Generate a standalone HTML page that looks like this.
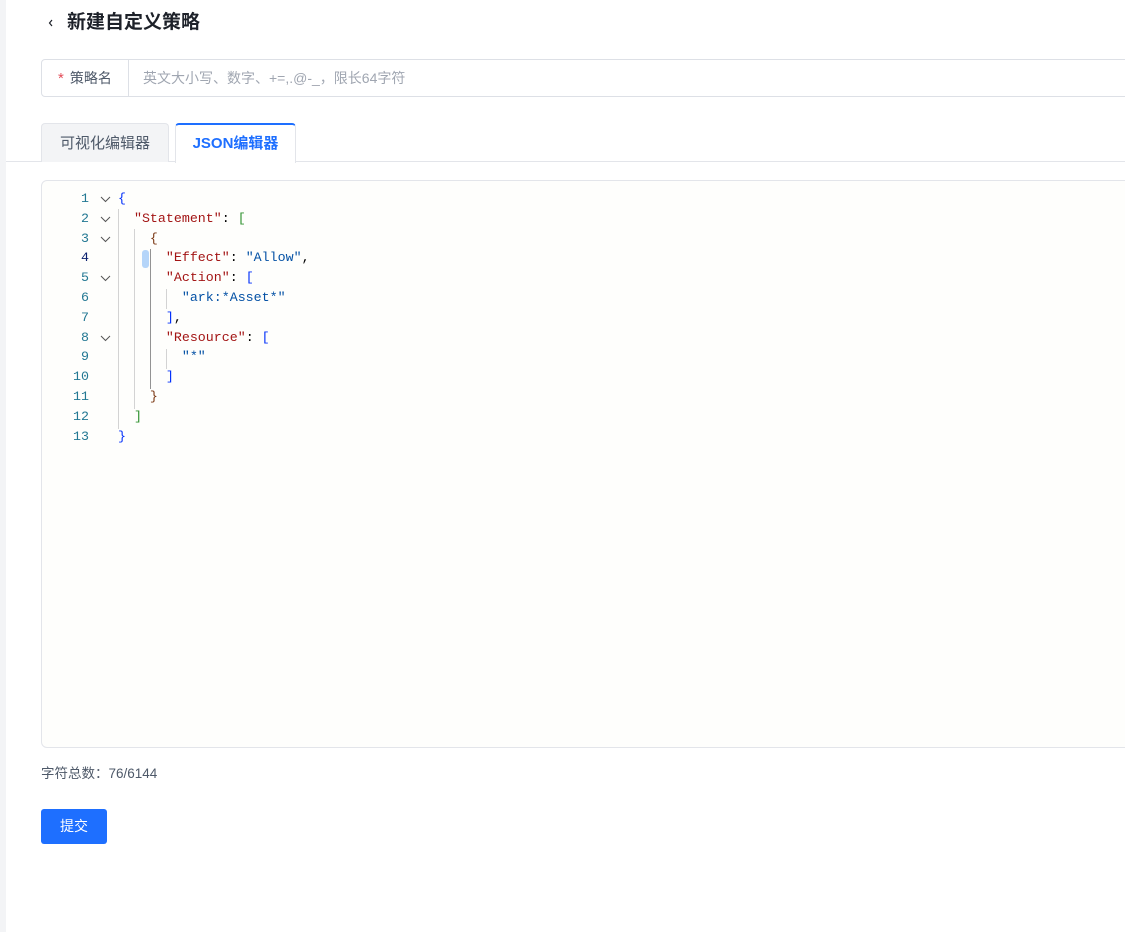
<!DOCTYPE html>
<html><head><meta charset="utf-8">
<style>
*{margin:0;padding:0;box-sizing:border-box}
html,body{width:1125px;height:932px;overflow:hidden;background:#fff;font-family:"Liberation Sans","Noto Sans CJK SC",sans-serif;position:relative}
.strip{position:absolute;left:0;top:0;width:6px;height:932px;background:#f3f4f6}
.title{position:absolute;left:67px;top:9px;font-size:19px;font-weight:bold;color:#1d2129;line-height:28px}
.back{position:absolute;left:46px;top:13px;width:10px;height:20px}
.inp{position:absolute;left:41px;top:59px;width:1100px;height:38px;border:1px solid #dde0e6;border-radius:4px}
.inp .lab{position:absolute;left:0;top:0;width:87px;height:36px;border-right:1px solid #dde0e6;font-size:14px;color:#4e5969;line-height:36px;padding-left:16px}
.inp .lab b{color:#e34d59;font-weight:normal;margin-right:6px;font-size:15px}
.inp .ph{position:absolute;left:101px;top:0;line-height:36px;font-size:14px;color:#a0a6b1}
.tabline{position:absolute;left:6px;top:161px;width:1119px;height:1px;background:#e3e5ea}
.tab1{position:absolute;left:41px;top:123px;width:128px;height:39px;background:#f3f4f6;border:1px solid #e3e5ea;border-bottom:none;border-radius:4px 4px 0 0;font-size:15px;color:#4e5969;text-align:center;line-height:40px}
.tab2{position:absolute;left:175px;top:123px;width:121px;height:40px;background:#fff;border:1px solid #e3e5ea;border-top:2px solid #1e6fff;border-bottom:none;border-radius:4px 4px 0 0;font-size:15px;color:#1e6fff;font-weight:bold;text-align:center;line-height:37px}
.ed{position:absolute;left:41px;top:180px;width:1100px;height:568px;border:1px solid #e3e5ea;border-radius:6px;background:#fefefc}
.code{position:absolute;left:0;top:1px;font-family:"Liberation Mono",monospace;font-size:13.3px}
.ln{position:absolute;width:50px;text-align:right;color:#237893;left:39px}
.ln.cur{color:#0b216f}
.fold{position:absolute;left:100px;width:11px;height:11px}
.tx{position:absolute;left:118px;white-space:pre;color:#000}
.k{color:#a31515}.s{color:#0451a5}.b1{color:#0431fa}.b2{color:#319331}.b3{color:#7b3814}
.g{position:absolute;width:1px;background:#d3d3d3}
.cnt{position:absolute;left:41px;top:762px;font-size:13.5px;color:#4e5969}
.btn{position:absolute;left:41px;top:809px;width:66px;height:35px;background:#1e6fff;border-radius:3px;color:#fff;font-size:14px;text-align:center;line-height:35px}
</style></head><body>
<div class="strip"></div>
<svg class="back" viewBox="0 0 10 20"><path d="M6 7 L3.5 10 L6 13" fill="none" stroke="#1d2129" stroke-width="1.2"/></svg>
<div class="title">新建自定义策略</div>
<div class="inp"><div class="lab"><b>*</b>策略名</div><div class="ph">英文大小写、数字、+=,.@-_，限长64字符</div></div>
<div class="tabline"></div>
<div class="tab1">可视化编辑器</div>
<div class="tab2">JSON编辑器</div>
<div class="ed"></div>
<div class="code">
<div class="g" style="left:118px;top:208px;height:220px"></div>
<div class="g" style="left:134px;top:228px;height:180px"></div>
<div class="g" style="left:150px;top:248px;height:140px;background:#939393"></div>
<div class="g" style="left:166px;top:288px;height:20px"></div>
<div class="g" style="left:166px;top:348px;height:20px"></div>
<div style="position:absolute;left:142px;top:249px;width:7px;height:18px;background:#b5d5f9;border-radius:3px"></div>
<div class="ln" style="top:190px">1</div>
<div class="ln" style="top:210px">2</div>
<div class="ln" style="top:230px">3</div>
<div class="ln cur" style="top:249px">4</div>
<div class="ln" style="top:269px">5</div>
<div class="ln" style="top:289px">6</div>
<div class="ln" style="top:309px">7</div>
<div class="ln" style="top:329px">8</div>
<div class="ln" style="top:348px">9</div>
<div class="ln" style="top:368px">10</div>
<div class="ln" style="top:388px">11</div>
<div class="ln" style="top:408px">12</div>
<div class="ln" style="top:428px">13</div>
<svg class="fold" style="top:193px" viewBox="0 0 11 11"><path d="M1 3 L5.5 7.5 L10 3" fill="none" stroke="#555" stroke-width="1"/></svg>
<svg class="fold" style="top:213px" viewBox="0 0 11 11"><path d="M1 3 L5.5 7.5 L10 3" fill="none" stroke="#555" stroke-width="1"/></svg>
<svg class="fold" style="top:233px" viewBox="0 0 11 11"><path d="M1 3 L5.5 7.5 L10 3" fill="none" stroke="#555" stroke-width="1"/></svg>
<svg class="fold" style="top:272px" viewBox="0 0 11 11"><path d="M1 3 L5.5 7.5 L10 3" fill="none" stroke="#555" stroke-width="1"/></svg>
<svg class="fold" style="top:332px" viewBox="0 0 11 11"><path d="M1 3 L5.5 7.5 L10 3" fill="none" stroke="#555" stroke-width="1"/></svg>
<div class="tx" style="top:190px"><span class="b1">{</span></div>
<div class="tx" style="top:210px">  <span class="k">"Statement"</span>: <span class="b2">[</span></div>
<div class="tx" style="top:230px">    <span class="b3">{</span></div>
<div class="tx" style="top:249px">      <span class="k">"Effect"</span>: <span class="s">"Allow"</span>,</div>
<div class="tx" style="top:269px">      <span class="k">"Action"</span>: <span class="b1">[</span></div>
<div class="tx" style="top:289px">        <span class="s">"ark:*Asset*"</span></div>
<div class="tx" style="top:309px">      <span class="b1">]</span>,</div>
<div class="tx" style="top:329px">      <span class="k">"Resource"</span>: <span class="b1">[</span></div>
<div class="tx" style="top:348px">        <span class="s">"*"</span></div>
<div class="tx" style="top:368px">      <span class="b1">]</span></div>
<div class="tx" style="top:388px">    <span class="b3">}</span></div>
<div class="tx" style="top:408px">  <span class="b2">]</span></div>
<div class="tx" style="top:428px"><span class="b1">}</span></div>
</div>
<div class="cnt">字符总数：76/6144</div>
<div class="btn">提交</div>
</body></html>
